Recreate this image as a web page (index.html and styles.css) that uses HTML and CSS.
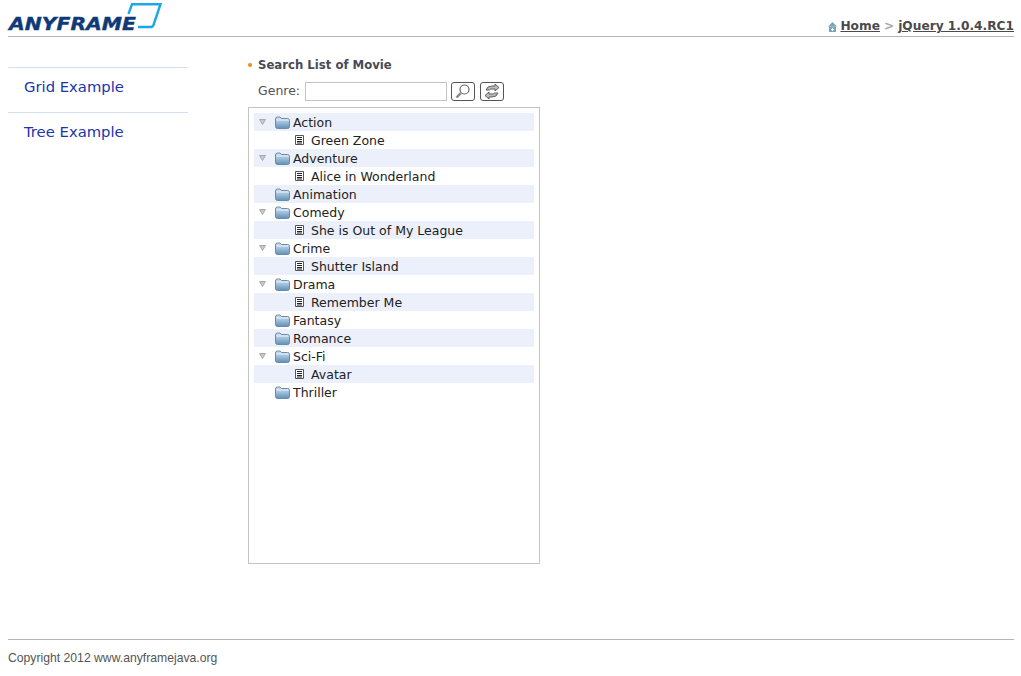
FILE: index.html
```html
<!DOCTYPE html>
<html>
<head>
<meta charset="utf-8">
<title>Anyframe</title>
<link rel="stylesheet" href="styles.css">
</head>
<body>
<svg class="defs" width="0" height="0">
  <defs>
    <linearGradient id="fg" x1="0" y1="0" x2="0" y2="1">
      <stop offset="0" stop-color="#d3e2ef"/><stop offset=".5" stop-color="#9dbdd8"/><stop offset="1" stop-color="#5f8fb8"/>
    </linearGradient>
    <symbol id="folder" viewBox="0 0 15 13">
      <path d="M.5 3Q.5 1 2.500 1H5L6.500 2.500H12.500Q14.500 2.500 14.500 4.500V10.500Q14.500 12.500 12.500 12.500H2.500Q.5 12.500 .5 10.500Z" fill="url(#fg)" stroke="#6a8aa8"/>
      <path d="M1.500 4H13.500" stroke="#eaf2f8"/>
    </symbol>
    <symbol id="doc" viewBox="0 0 9 10">
      <path d="M.5.5H8.500V9.500H.5Z" fill="#fff" stroke="#555"/>
      <path d="M2 2.500H7M2 4.500H7M2 6.500H7M2 8H7" stroke="#222"/>
    </symbol>
    <symbol id="arrow" viewBox="0 0 7 6">
      <path d="M.5.5H6.500L3.500 5.500Z" fill="#c8c8c8" stroke="#aaa"/>
    </symbol>
  </defs>
</svg>
<header class="top">
  <div class="logo">
    <span class="logo-text">ANYFRAME</span>
    <svg class="logo-frame" width="37" height="27" viewBox="0 0 37 27">
      <path d="M1.500 12L5 2.200H33.500L26.500 23Q25.800 25 23.500 25H11" fill="none" stroke="#1ea7e8" stroke-width="2.400"/>
    </svg>
  </div>
  <nav class="crumbs">
    <svg class="home" width="9" height="10" viewBox="0 0 9 10"><path d="M4.500 0L9 4.500H0Z" fill="#7ba6ba"/><path d="M1 4.500H8V10H1Z" fill="#7ba6ba"/><path d="M3 7.500H6M4.500 6V9" stroke="#fff"/></svg>
    <a href="#">Home</a><span class="sep">&gt;</span><a href="#">jQuery 1.0.4.RC1</a>
  </nav>
</header>
<div class="body">
  <aside class="side">
    <a class="side-link" href="#">Grid Example</a>
    <a class="side-link" href="#">Tree Example</a>
  </aside>
  <main class="main">
    <h1 class="title">Search List of Movie</h1>
    <div class="search">
      <label class="lbl">Genre:</label>
      <input class="field" type="text">
      <button class="btn"><svg width="18" height="17" viewBox="0 0 18 17"><circle cx="10.500" cy="6.500" r="4.500" fill="#fff" stroke="#666" stroke-width="1.200"/><path d="M7 10L2.500 14.500" stroke="#888" stroke-width="2.400"/></svg></button>
      <button class="btn"><svg width="18" height="17" viewBox="0 0 18 17"><path d="M3 7Q4 3 9 3H12V1L16 4.500L12 8V6H9Q7 6 6.500 7Z" fill="#bbb" stroke="#555" stroke-width=".9"/><path d="M15 10Q14 14 9 14H6V16L2 12.500L6 9V11H9Q11 11 11.500 10Z" fill="#bbb" stroke="#555" stroke-width=".9"/></svg></button>
    </div>
    <div class="tree">
      <div class="row alt"><svg class="arrow"><use href="#arrow"/></svg><svg class="folder"><use href="#folder"/></svg><span>Action</span></div>
      <div class="row leaf"><svg class="doc"><use href="#doc"/></svg><span>Green Zone</span></div>
      <div class="row alt"><svg class="arrow"><use href="#arrow"/></svg><svg class="folder"><use href="#folder"/></svg><span>Adventure</span></div>
      <div class="row leaf"><svg class="doc"><use href="#doc"/></svg><span>Alice in Wonderland</span></div>
      <div class="row alt closed"><svg class="folder"><use href="#folder"/></svg><span>Animation</span></div>
      <div class="row"><svg class="arrow"><use href="#arrow"/></svg><svg class="folder"><use href="#folder"/></svg><span>Comedy</span></div>
      <div class="row leaf alt"><svg class="doc"><use href="#doc"/></svg><span>She is Out of My League</span></div>
      <div class="row"><svg class="arrow"><use href="#arrow"/></svg><svg class="folder"><use href="#folder"/></svg><span>Crime</span></div>
      <div class="row leaf alt"><svg class="doc"><use href="#doc"/></svg><span>Shutter Island</span></div>
      <div class="row"><svg class="arrow"><use href="#arrow"/></svg><svg class="folder"><use href="#folder"/></svg><span>Drama</span></div>
      <div class="row leaf alt"><svg class="doc"><use href="#doc"/></svg><span>Remember Me</span></div>
      <div class="row closed"><svg class="folder"><use href="#folder"/></svg><span>Fantasy</span></div>
      <div class="row alt closed"><svg class="folder"><use href="#folder"/></svg><span>Romance</span></div>
      <div class="row"><svg class="arrow"><use href="#arrow"/></svg><svg class="folder"><use href="#folder"/></svg><span>Sci-Fi</span></div>
      <div class="row leaf alt"><svg class="doc"><use href="#doc"/></svg><span>Avatar</span></div>
      <div class="row closed"><svg class="folder"><use href="#folder"/></svg><span>Thriller</span></div>
    </div>
  </main>
</div>
<footer class="foot">Copyright 2012 www.anyframejava.org</footer>
</body>
</html>
```
FILE: styles.css
```css
html, body { margin: 0; padding: 0; background: #fff; }
body { padding: 0 7px 0 8px; height: 676px; box-sizing: border-box; font-family: "DejaVu Sans", sans-serif; overflow: hidden; }
.defs { display: block; height: 0; }
.top { height: 36px; border-bottom: 1px solid #b5b5b5; display: flex; justify-content: space-between; align-items: flex-end; }
.logo { position: relative; width: 160px; height: 36px; }
.logo-text { position: absolute; left: 1px; top: 15px; font: italic 700 18px/18px "DejaVu Sans", sans-serif; color: #0f3a78; -webkit-text-stroke: .4px #0f3a78; transform: scaleX(1.13); transform-origin: 0 50%; white-space: nowrap; }
.logo-frame { position: absolute; left: 119px; top: 2px; }
.crumbs { display: flex; align-items: center; font-size: 12.200px; font-weight: 700; line-height: 16px; padding-bottom: 2px; color: #4a4a4a; }
.crumbs a { color: #4a4a4a; }
.home { margin-right: 3px; margin-top: 1px; }
.sep { color: #aaa; margin: 0 4px; }
.body { display: flex; height: 602px; }
.side { width: 180px; margin-right: 60px; padding-top: 30px; }
.side-link { display: block; height: 44px; line-height: 37px; border-top: 1px solid #d3dff5; padding-left: 16px; font-size: 14.800px; color: #1c35ad; text-decoration: none; }
.main { width: 292px; padding-top: 20px; }
.title { margin: 0; font-size: 11.700px; line-height: 16px; font-weight: 700; color: #4a4a55; padding-left: 10px; position: relative; }
.title::before { content: ""; position: absolute; left: 0; top: 6px; width: 4px; height: 4px; border-radius: 50%; background: #f08a1d; }
.search { display: flex; align-items: center; margin-top: 9px; padding-left: 10px; height: 19px; }
.lbl { font-size: 12.500px; color: #555; margin-right: 5px; padding-bottom: 2px; }
.field { width: 142px; height: 19px; box-sizing: border-box; border: 1px solid #c4c4c4; padding: 0; margin: 0 4px 0 0; background: #fff; }
.btn { width: 24px; height: 19px; box-sizing: border-box; padding: 0; margin: 0 5px 0 0; border: 1px solid #555; border-radius: 3px; background: #fff; display: flex; align-items: center; justify-content: center; }
.tree { margin-top: 6px; height: 457px; box-sizing: border-box; border: 1px solid #c4c4c4; padding: 5px; }
.row { display: flex; align-items: center; height: 18px; font-size: 12.500px; color: #222; padding-left: 5px; white-space: nowrap; }
.alt { background: #ebf0fb; }
.closed { padding-left: 21px; }
.leaf { padding-left: 41px; }
.arrow { width: 7px; height: 6px; margin-right: 9px; flex: none; margin-top: -1px; }
.folder { width: 15px; height: 13px; margin-right: 3px; flex: none; }
.doc { width: 9px; height: 10px; margin-right: 7px; flex: none; }
.foot { border-top: 1px solid #b5b5b5; padding-top: 10px; font: 12.200px/16px "Liberation Sans", sans-serif; color: #555; }
```
